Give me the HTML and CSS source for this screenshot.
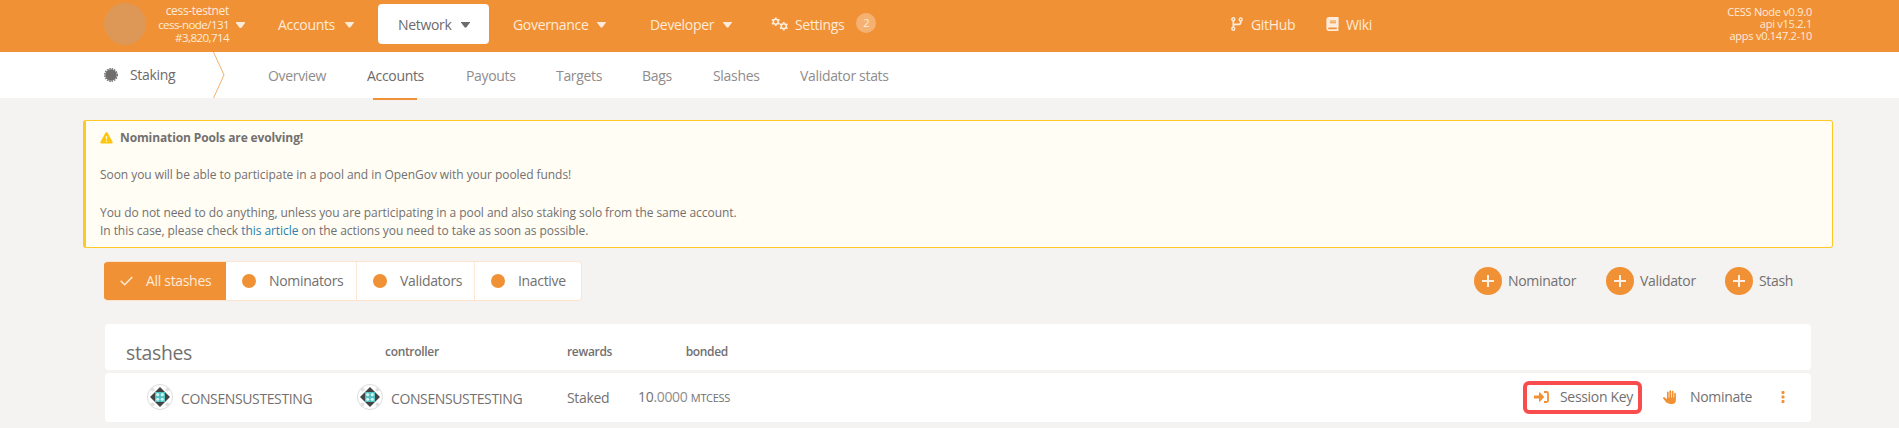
FILE: index.html
```html
<!DOCTYPE html>
<html lang="en"><head><meta charset="utf-8"><title>Staking</title><link rel="stylesheet" href="styles.css"></head>
<body>
<svg width="0" height="0" class="defs"><defs>
<symbol id="gear" viewBox="0 0 10 10"><g fill="none" stroke="currentColor"><circle cx="5" cy="5" r="2.600" stroke-width="1.700"/><path stroke-width="1.900" d="M5 .4v1.800M5 7.800v1.800M1 2.700l1.600.9M7.400 6.400l1.600.9M1 7.300l1.600-.9M7.400 3.600l1.600-.9"/></g></symbol>
<symbol id="ident" viewBox="0 0 26 26"><circle cx="13" cy="13" r="12.500" fill="#fff" stroke="#ddd"/><g fill="#e2e2e2"><circle cx="5.500" cy="5.500" r="2"/><circle cx="20.500" cy="5.500" r="2"/><circle cx="5.500" cy="20.500" r="2"/><circle cx="20.500" cy="20.500" r="2"/></g><path fill="#444" d="M13 3l10 10-10 10L3 13z"/><path fill="#54c1c1" d="M8 8h10v10H8z"/><g fill="#cff3f0"><circle cx="10.700" cy="10.700" r="1.600"/><circle cx="15.300" cy="10.700" r="1.600"/><circle cx="10.700" cy="15.300" r="1.600"/><circle cx="15.300" cy="15.300" r="1.600"/></g></symbol>
</defs></svg>
<header class="topbar">
 <div class="chain"><span class="logo"></span><div class="chain-info"><div>cess-testnet</div><div class="tight">cess-node/131</div><div class="tight">#3,820,714</div></div><i class="caret"></i></div>
 <nav class="menu">
  <a class="m-acc"><span>Accounts</span><i class="caret"></i></a>
  <a class="m-net"><span>Network</span><i class="caret"></i></a>
  <a class="m-gov"><span>Governance</span><i class="caret"></i></a>
  <a class="m-dev"><span>Developer</span><i class="caret"></i></a>
  <a class="m-set"><svg width="18" height="14" viewBox="0 0 18 14"><use href="#gear" x="0" y="0" width="9.500" height="9.500"/><use href="#gear" x="8" y="4.500" width="9.500" height="9.500"/></svg><span>Settings</span><b class="badge">2</b></a>
 </nav>
 <a class="ext github"><svg width="12" height="14" viewBox="0 0 12 14" fill="none" stroke="currentColor"><circle cx="2.300" cy="2.300" r="1.500" stroke-width="1.400"/><circle cx="2.300" cy="11.700" r="1.500" stroke-width="1.400"/><circle cx="9.700" cy="2.500" r="1.500" stroke-width="1.400"/><path stroke-width="1.700" d="M2.300 4v6M9.700 4v1.600q0 1.700-1.700 1.700H4.500q-2 0-2.200 1.500"/></svg><span>GitHub</span></a>
 <a class="ext wiki"><svg width="13" height="14" viewBox="0 0 448 512" fill="currentColor"><path fill-rule="evenodd" d="M448 360V24c0-13-11-24-24-24H96C43 0 0 43 0 96v320c0 53 43 96 96 96h328c13 0 24-11 24-24v-16c0-7-4-14-9-19-4-15-4-59 0-74 6-4 9-11 9-19zM128 134c0-3 3-6 6-6h212c3 0 6 3 6 6v20c0 3-3 6-6 6H134c-3 0-6-3-6-6zm0 64c0-3 3-6 6-6h212c3 0 6 3 6 6v20c0 3-3 6-6 6H134c-3 0-6-3-6-6zm253 250H96c-18 0-32-14-32-32 0-17 14-32 32-32h285c-2 17-2 47 0 64z"/></svg><span>Wiki</span></a>
 <div class="versions"><div>CESS Node v0.9.0</div><div>api v15.2.1</div><div>apps v0.147.2-10</div></div>
</header>
<nav class="tabs">
 <div class="section"><svg width="14" height="14" viewBox="-7 -7 14 14"><circle r="5.700" fill="#706d6d"/><circle r="6.200" fill="none" stroke="#706d6d" stroke-width="1.500" stroke-dasharray="1.500 .935"/></svg><span>Staking</span></div>
 <svg class="arrow" width="12" height="46" viewBox="0 0 12 46" fill="none" stroke="#f4ae6b"><path d="M.5 0l10.500 23L.5 46"/></svg>
 <a class="t1">Overview</a><a class="t2 on">Accounts</a><a class="t3">Payouts</a><a class="t4">Targets</a><a class="t5">Bags</a><a class="t6">Slashes</a><a class="t7">Validator stats</a>
</nav>
<main>
 <article class="notice">
  <p class="lead"><svg width="13" height="12" viewBox="0 0 13 12"><path fill="#ffc40c" d="M6.500 0q.6 0 .9.500l5.200 9.500q.5 1.200-.9 1.500H1.300Q-.1 11.200.4 10L5.600.5Q5.900 0 6.500 0z"/><path stroke="#fff3c4" stroke-width="1.400" d="M6.500 4v3.500M6.500 8.500V10"/></svg><strong>Nomination Pools are evolving!</strong></p>
  <p class="soon">Soon you will be able to participate in a pool and in OpenGov with your pooled funds!</p>
  <p>You do not need to do anything, unless you are participating in a pool and also staking solo from the same account.<br>In this case, please check <a>this article</a> on the actions you need to take as soon as possible.</p>
 </article>
 <section class="tools">
  <div class="filters">
   <button class="f1"><svg width="13" height="10" viewBox="0 0 13 10" fill="none" stroke="currentColor" stroke-width="1.500"><path d="M.7 4.800l4 4L12.300.9"/></svg><span>All stashes</span></button><button class="f2"><i></i><span>Nominators</span></button><button class="f3"><i></i><span>Validators</span></button><button class="f4"><i></i><span>Inactive</span></button>
  </div>
  <div class="adds"><a class="a1"><i class="plus"></i><span>Nominator</span></a><a class="a2"><i class="plus"></i><span>Validator</span></a><a class="a3"><i class="plus"></i><span>Stash</span></a></div>
 </section>
 <section class="table">
  <div class="head"><h1>stashes</h1><b class="c2">controller</b><b class="c3">rewards</b><b class="c4">bonded</b></div>
  <div class="row">
   <div class="who first"><svg width="26" height="26"><use href="#ident"/></svg><span>CONSENSUSTESTING</span></div>
   <div class="who"><svg width="26" height="26"><use href="#ident"/></svg><span>CONSENSUSTESTING</span></div>
   <div class="staked">Staked</div>
   <div class="bond">10<span class="dec">.0000</span> <small>MTCESS</small></div>
   <div class="actions">
    <a class="session"><svg width="15" height="12" viewBox="0 0 15 12" fill="none" stroke="#f19135"><path stroke-width="1.800" d="M10 1h2.500q1.500 0 1.500 1.500v7q0 1.500-1.500 1.500H10"/><path fill="#f19135" stroke="none" d="M0 4.500h5V1.800q.2-.8 1-.3L10.300 6 6 10.500q-.8.5-1-.3V7.500H0z"/></svg><span>Session Key</span></a>
    <a class="nominate"><svg width="14" height="14" viewBox="0 0 14 14" stroke="#f19135" stroke-width="1.700" stroke-linecap="round" fill="none"><path d="M4.800 8V2.300M7.200 8V1M9.600 8V1.700M12 8V3.700M1 8l3 4"/><path fill="#f19135" stroke="none" d="M4 7.500h8.900V10q0 4-4 4H7.300Q5 14 3.700 12L.3 8.500l1.100-1L4 9z"/></svg><span>Nominate</span></a>
    <svg class="dots" width="4" height="12" viewBox="0 0 4 12" fill="#f19135"><rect x=".5" width="3" height="3" rx="1"/><rect x=".5" y="4.500" width="3" height="3" rx="1"/><rect x=".5" y="9" width="3" height="3" rx="1"/></svg>
   </div>
  </div>
 </section>
</main>
</body></html>
```
FILE: styles.css
```css
* { box-sizing: border-box; }
body { margin: 0; width: 1899px; height: 428px; overflow: hidden; background: #f4f3f1; color: #737070; font: 14px/20px "Open Sans", "Noto Sans", sans-serif; letter-spacing: -.32px; }
.defs { position: absolute; }
svg { display: block; flex: none; }
span { white-space: nowrap; }
.topbar { display: flex; height: 52px; background: #f19135; color: #feebd9; padding-left: 104px; }
.chain { display: flex; width: 155px; padding-top: 3px; }
.logo { width: 42px; height: 42px; border-radius: 50%; background: #dd9858; }
.chain-info { width: 83px; text-align: right; font-size: 12px; line-height: 13.500px; padding-top: 1px; }
.chain-info div { white-space: nowrap; }
.chain-info .tight { font-size: 11.600px; letter-spacing: -.6px; }
.caret { width: 9px; height: 6px; background: currentColor; clip-path: polygon(0 0, 100% 0, 100% 16%, 58% 100%, 42% 100%, 0 16%); flex: none; }
.chain .caret { margin: 19px 0 0 7px; }
.menu { display: flex; padding-top: 4px; width: 972px; }
.menu a { display: flex; align-items: center; height: 40px; padding-left: 20px; padding-top: 2px; }
.menu .caret { margin: -1px 0 0 auto; }
.m-acc { width: 119px; padding-right: 24px; }
.m-net { width: 111px; padding-right: 19px; background: #fff; color: #6d6a6a; border-radius: 4px; }
.menu .m-acc { padding-left: 19px; }
.menu .m-gov { width: 137px; padding-left: 24px; padding-right: 20px; }
.menu .m-dev { width: 126px; padding-left: 24px; padding-right: 20px; }
.menu .m-set { padding-left: 19px; }
.m-set svg { margin: -3px 6px 0 0; }
.badge { width: 20px; height: 20px; border-radius: 50%; background: #f5b172; text-align: center; font-size: 11px; font-weight: 400; margin: -5px 0 0 12px; }
.ext { display: flex; height: 20px; margin-top: 15px; }
.github { width: 95px; }
.github svg { margin: 2px 8px 0 0; }
.wiki svg { margin: 2px 7px 0 0; }
.versions { margin-left: auto; margin-right: 87px; padding-top: 6px; text-align: right; font-size: 11px; letter-spacing: -.25px; line-height: 12px; }
.tabs { display: flex; height: 46px; background: #fff; padding-left: 104px; color: #8f8c8c; line-height: 48px; }
.section { display: flex; align-items: center; width: 109px; color: #6d6a6a; line-height: 46px; }
.section span { margin-left: 12px; }
.section span { padding-bottom: 1px; }
.tabs a { white-space: nowrap; }
.t1 { width: 99px; margin-left: 43px; }
.t2 { width: 99px; }
.t2.on { color: #6d6a6a; background: linear-gradient(#f19135, #f19135) 6px 100% / 44px 2px no-repeat; height: 48px; }
.t3 { width: 90px; }
.t4 { width: 86px; }
.t5 { width: 71px; }
.t6 { width: 87px; }
.notice { margin: 22px 66px 0 83px; height: 128px; border: 1px solid #ffc925; border-left-width: 3px; border-radius: 3px; background: #fffdf4; padding: 8px 14px; font-size: 12px; letter-spacing: -.06px; line-height: 18px; }
.notice p { margin: 0; white-space: nowrap; }
.lead { display: flex; align-items: center; }
.lead strong { margin-left: 7px; letter-spacing: -.12px; }
.notice .soon { margin: 19px 0 20px; }
.notice a { color: #2a7fae; }
.tools { display: flex; justify-content: space-between; padding: 13px 106px 0 104px; height: 76px; }
.filters { display: flex; height: 40px; width: 478px; border: 1px solid #fbe3cd; border-left: 0; border-radius: 4px; background: #fff; overflow: hidden; }
.filters button { display: flex; align-items: center; border: 0; border-right: 1px solid #fde8d4; background: none; color: inherit; font: inherit; letter-spacing: inherit; padding: 0 0 0 16px; }
.filters i { width: 14px; height: 14px; border-radius: 50%; background: #f19135; margin-right: 13px; }
.filters .f1 { width: 122px; background: #f19135; color: #feebd9; border: 0; }
.f1 svg { margin-right: 13px; }
.f2 { width: 131px; }
.f3 { width: 118px; }
.filters .f4 { border: 0; }
.adds { display: flex; height: 40px; align-items: center; }
.adds a { display: flex; align-items: center; }
.a1 { width: 132px; }
.a2 { width: 119px; }
.a3 { width: 68px; }
.plus { width: 28px; height: 28px; margin-right: 6px; border-radius: 50%; background: linear-gradient(#fff0e2,#fff0e2) 8px 13px / 12px 2px no-repeat, linear-gradient(#fff0e2,#fff0e2) 13px 8px / 2px 12px no-repeat, #f19135; }
.table { margin: 0 88px 0 105px; }
.head { display: flex; height: 46px; background: #fff; border-radius: 4px; padding-left: 21px; margin-bottom: 3px; }
h1 { margin: 17px 0 0; width: 259px; font-size: 19.400px; line-height: 24px; font-weight: 400; }
.head b { font-size: 12px; font-weight: 600; margin-top: 18px; }
.c2 { width: 182px; }
.c3 { width: 80px; }
.c4 { width: 81px; text-align: right; }
.row { display: flex; height: 49px; background: #fff; border-radius: 4px; align-items: center; }
.who { display: flex; align-items: center; width: 210px; letter-spacing: -.38px; }
.first { margin-left: 42px; }
.who svg { margin-right: 8px; margin-top: -1px; }
.who span { padding-top: 3px; }
.staked { width: 71px; }
.bond { width: 90px; text-align: right; white-space: nowrap; }
.dec { opacity: .8; }
small { font-size: 11px; }
.actions { display: flex; align-items: center; margin-left: auto; padding-bottom: 1px; }
.session { display: flex; align-items: center; width: 119px; height: 33px; border: 4px solid #f94d4d; border-radius: 6px; padding-left: 7px; }
.session svg { margin-right: 11px; }
.nominate { display: flex; align-items: center; width: 139px; padding-left: 21px; }
.nominate svg { margin-right: 13px; }
.dots { margin-right: 26px; }
```
